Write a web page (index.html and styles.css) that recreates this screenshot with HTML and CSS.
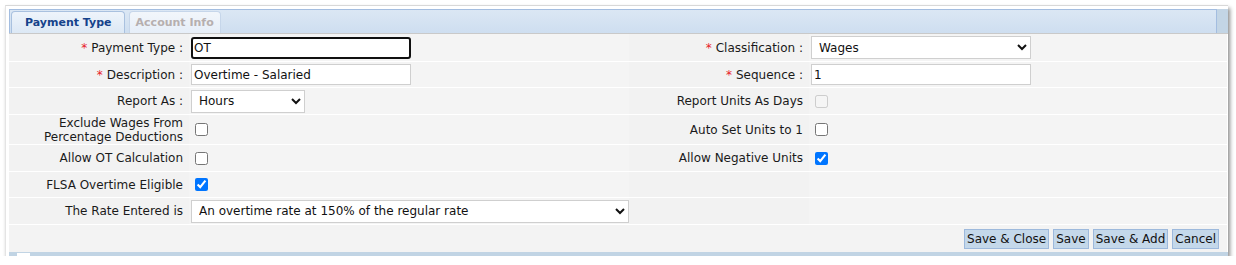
FILE: index.html
```html
<!DOCTYPE html>
<html lang="en">
<head>
    <meta charset="UTF-8">
    <title>Payment Type</title>
    <link rel="stylesheet" href="styles.css">
</head>
<body>
    <div class="window">
        <div class="tabbar">
            <div class="tabstrip">
                <div class="tab active">Payment Type</div>
                <div class="tab disabled">Account Info</div>
            </div>
        </div>

        <div class="content">
            <div class="form-grid">
                <div class="label"><span class="req">*</span> Payment Type :</div>
                <div class="value"><input type="text" class="txt focused" value="OT"></div>
                <div class="label"><span class="req">*</span> Classification :</div>
                <div class="value">
                    <select class="sel sel-mid"><option>Wages</option></select>
                </div>

                <div class="label"><span class="req">*</span> Description :</div>
                <div class="value"><input type="text" class="txt" value="Overtime - Salaried"></div>
                <div class="label"><span class="req">*</span> Sequence :</div>
                <div class="value"><input type="text" class="txt" value="1"></div>

                <div class="label">Report As :</div>
                <div class="value">
                    <select class="sel sel-small"><option>Hours</option></select>
                </div>
                <div class="label">Report Units As Days</div>
                <div class="value"><input type="checkbox" disabled></div>

                <div class="label two-line">Exclude Wages From<br>Percentage Deductions</div>
                <div class="value"><input type="checkbox"></div>
                <div class="label">Auto Set Units to 1</div>
                <div class="value"><input type="checkbox"></div>

                <div class="label">Allow OT Calculation</div>
                <div class="value"><input type="checkbox"></div>
                <div class="label">Allow Negative Units</div>
                <div class="value"><input type="checkbox" checked></div>

                <div class="label">FLSA Overtime Eligible</div>
                <div class="value"><input type="checkbox" checked></div>
                <div class="label"></div>
                <div class="value"></div>

                <div class="label">The Rate Entered is</div>
                <div class="value">
                    <select class="sel sel-wide"><option>An overtime rate at 150% of the regular rate</option></select>
                </div>
                <div class="label"></div>
                <div class="value"></div>
            </div>

            <div class="buttons">
                <button>Save &amp; Close</button>
                <button>Save</button>
                <button>Save &amp; Add</button>
                <button>Cancel</button>
            </div>
        </div>

        <div class="statusbar"><span class="grip"></span></div>
    </div>
</body>
</html>
```

FILE: styles.css
```css
* {
    margin: 0;
    padding: 0;
    box-sizing: border-box;
}

body {
    font-family: "DejaVu Sans", Verdana, sans-serif;
    font-size: 12px;
    color: #111;
    background: #fff;
}

.window {
    margin: 5px 0 0 5px;
    width: 1223px;
    padding: 3px 0 0 3px;
    background: #fff;
    border-top: 1px solid #d8d8d8;
    border-left: 1px solid #e4e4e4;
    box-shadow: 2px 3px 4px rgba(0, 0, 0, 0.45);
}

.tabbar {
    height: 25px;
    background: #c3d5e5;
    border-bottom: 1px solid #c9c9c9;
}

.tabstrip {
    height: 24px;
    margin-right: 11px;
    border: 1px solid #a3bde0;
    border-bottom: none;
    background: linear-gradient(#dbe7f4, #cedef0);
    display: flex;
    align-items: flex-end;
    padding-left: 1px;
    gap: 4px;
}

.tab {
    height: 22px;
    padding: 3px 12px 0 13px;
    border: 1px solid #a9c1df;
    border-bottom: none;
    border-radius: 4px 4px 0 0;
    font-weight: bold;
    font-size: 11px;
    line-height: 16px;
    white-space: nowrap;
}

.tab.active {
    background: linear-gradient(#eef4fb, #dce8f5);
    color: #15428b;
}

.tab.disabled {
    padding: 3px 6px 0 6px;
    background: linear-gradient(#f2f6fb, #e6eef8);
    border-color: #c6d6ea;
    color: #b6afaf;
}

.content {
    background: #f3f3f3;
    border-right: 1px solid #fff;
}

.form-grid {
    display: grid;
    grid-template-columns: 180px 440px 180px 1fr;
    grid-template-rows: 28px 26px 27px 30px 27px 26px 27px;
}

.label,
.value {
    border-bottom: 1px solid #fff;
    display: flex;
    align-items: center;
}

.label {
    justify-content: flex-end;
    padding-right: 6px;
    background: #f2f2f2;
    color: #1a1a1a;
    white-space: nowrap;
}

.label.two-line {
    text-align: right;
    line-height: 14px;
    padding-top: 1px;
}

.value {
    padding-left: 2px;
    background: #f4f4f4;
}

.req {
    color: #e8202a;
    margin-right: 4px;
}

.txt {
    width: 220px;
    height: 21px;
    border: 1px solid #cfcfcf;
    background: #fff;
    font: 12px "DejaVu Sans", Verdana, sans-serif;
    color: #111;
    padding: 0 2px;
    outline: none;
}

.txt.focused {
    height: 22px;
    border: 2px solid #101010;
    border-radius: 3px;
    padding: 0 1px;
}

.sel {
    height: 23px;
    border: 1px solid #cfcfcf;
    border-radius: 0;
    background: #fff;
    font: 12px "DejaVu Sans", Verdana, sans-serif;
    color: #111;
    padding-left: 3px;
    outline: none;
}

.sel-small {
    width: 114px;
}

.sel-mid {
    width: 220px;
}

.sel-wide {
    width: 438px;
}

input[type="checkbox"] {
    width: 13px;
    height: 13px;
    margin: 0 0 0 4px;
}

.buttons {
    height: 27px;
    display: flex;
    justify-content: flex-end;
    align-items: flex-end;
    gap: 4px;
    padding: 0 8px 3px 0;
}

button {
    height: 20px;
    padding: 0 2px;
    background: #c4d8ea;
    border: 1px solid #9db9dc;
    font: 12px "DejaVu Sans", Verdana, sans-serif;
    color: #111;
    cursor: pointer;
}

button:hover {
    background: #b3cce3;
}

.statusbar {
    height: 4px;
    background: #c1d4e4;
    position: relative;
}

.grip {
    position: absolute;
    left: 8px;
    top: 1px;
    width: 13px;
    height: 3px;
    background: #fff;
}
```
